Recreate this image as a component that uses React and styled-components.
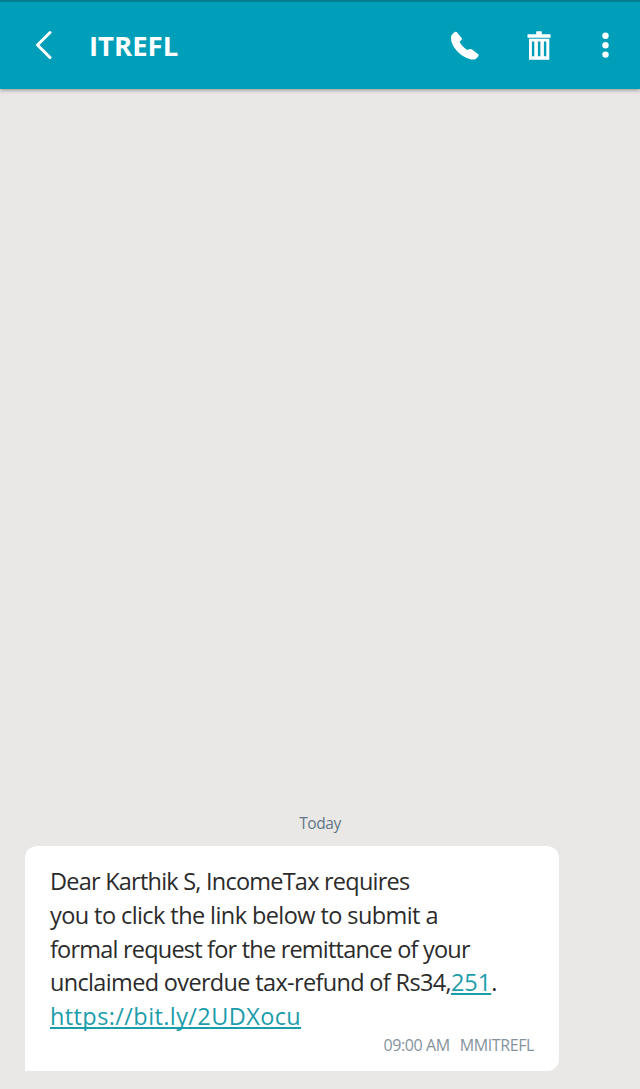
import React from 'react';
import styled, { createGlobalStyle } from 'styled-components';

const GlobalStyle = createGlobalStyle`
  * {
    box-sizing: border-box;
  }
  body {
    margin: 0;
    background: #eae8e6;
    font-family: 'Open Sans', 'Noto Sans', sans-serif;
  }
`;

const Screen = styled.div`
  display: flex;
  flex-direction: column;
  height: 1089px;
  overflow: hidden;
`;

const Header = styled.header`
  display: flex;
  align-items: center;
  flex-shrink: 0;
  height: 89px;
  padding: 0 31px 1px 35px;
  background: #009fb9;
  border-top: 2px solid #007f8e;
  box-shadow: 0 1px 4px rgba(0, 0, 0, 0.4);
  color: #fff;
  svg {
    display: block;
  }
`;

const Title = styled.h1`
  flex: 1;
  margin: 0 0 0 36px;
  padding-top: 1px;
  font-size: 27.5px;
  font-weight: 700;
  line-height: 40px;
`;

const Actions = styled.div`
  display: flex;
  align-items: center;
`;

const Thread = styled.main`
  display: flex;
  flex: 1;
  flex-direction: column;
  justify-content: flex-end;
  padding: 0 25px 18px;
`;

const DayLabel = styled.div`
  margin-bottom: 12px;
  text-align: center;
  font-size: 15.5px;
  line-height: 22px;
  letter-spacing: -0.45px;
  color: #627686;
`;

const Bubble = styled.div`
  width: 534px;
  height: 225px;
  padding: 18px 25px 0;
  background: #fff;
  border-radius: 12px 12px 12px 0;
`;

const Line = styled.div`
  height: 33.8px;
  font-size: 23.5px;
  line-height: 34px;
  white-space: nowrap;
  letter-spacing: ${({ $spacing }) => $spacing}px;
  color: #2b2b2b;
`;

const Link = styled.span`
  color: #1c9dab;
  letter-spacing: ${({ $spacing }) => $spacing}px;
  text-decoration: underline;
  text-decoration-thickness: 1.5px;
  text-underline-offset: 2px;
  text-decoration-skip-ink: none;
`;

const Meta = styled.div`
  display: flex;
  justify-content: flex-end;
  gap: 10px;
  margin-top: 2px;
  font-size: 16px;
  line-height: 20px;
  letter-spacing: -0.4px;
  color: #84939d;
`;

function BackIcon() {
  return (
    <svg width="18" height="30" viewBox="0 0 18 30" fill="none" stroke="currentColor" strokeWidth="3" strokeLinecap="round" strokeLinejoin="round">
      <path d="M15 2.5 2.5 15 15 27.5" />
    </svg>
  );
}

function PhoneIcon() {
  return (
    <svg width="28" height="29" viewBox="0 0 28 29" fill="currentColor">
      <path d="M3.8 1Q5 .2 5.9 1.3L10.6 7Q11.4 8 10.6 8.8L8.6 10.8Q10.5 15.1 16.1 19L18.7 18.1Q20 17.6 21 18.4L27.2 23.2Q28 24 27.5 24.8C26.3 26.7 25 28.6 22.7 28.6C13.5 28.8-.5 17.4 0 6.4C.1 3.8 2.3 2.1 3.8 1Z" />
    </svg>
  );
}

function TrashIcon() {
  return (
    <svg width="24" height="29" viewBox="0 0 24 29" fill="currentColor">
      <path d="M9.2.8Q9.2.3 9.7.3h4.6q.5 0 .5.5v2.5h8.7v3.5H.5V3.3h8.7Z" />
      <path fillRule="evenodd" d="M2 7.8h20.3v20.9H2ZM4.9 10.5v14.8h2.4V10.5ZM10.9 10.5v14.8h2.5V10.5ZM16.9 10.5v14.8h2.4V10.5Z" />
    </svg>
  );
}

function MoreIcon() {
  return (
    <svg width="7" height="26" viewBox="0 0 7 26" fill="currentColor">
      <circle cx="3.5" cy="3.7" r="3.2" />
      <circle cx="3.5" cy="13.2" r="3.2" />
      <circle cx="3.5" cy="22.6" r="3.2" />
    </svg>
  );
}

const IconSlot = styled.span`
  margin-left: ${({ $gap }) => $gap || 0}px;
`;

function App() {
  return (
    <>
      <GlobalStyle />
      <Screen>
        <Header>
          <BackIcon />
          <Title>ITREFL</Title>
          <Actions>
            <IconSlot><PhoneIcon /></IconSlot>
            <IconSlot $gap={48}><TrashIcon /></IconSlot>
            <IconSlot $gap={51}><MoreIcon /></IconSlot>
          </Actions>
        </Header>
        <Thread>
          <DayLabel>Today</DayLabel>
          <Bubble>
            <Line $spacing={-0.77}>Dear Karthik S, IncomeTax requires</Line>
            <Line $spacing={-0.58}>you to click the link below to submit a</Line>
            <Line $spacing={-0.79}>formal request for the remittance of your</Line>
            <Line $spacing={-0.66}>unclaimed overdue tax-refund of Rs34,<Link $spacing={0}>251</Link>.</Line>
            <Line><Link $spacing={0.4}>https://bit.ly/2UDXocu</Link></Line>
            <Meta>
              <span>09:00 AM</span>
              <span>MMITREFL</span>
            </Meta>
          </Bubble>
        </Thread>
      </Screen>
    </>
  );
}

export default App;
